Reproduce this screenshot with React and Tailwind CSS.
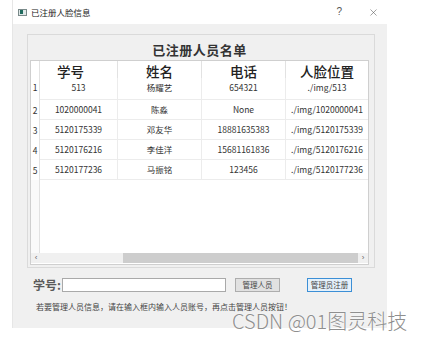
import { X } from "lucide-react";

const rows = [
  { id: "513", name: "杨耀艺", phone: "654321", img: "./img/513" },
  { id: "1020000041", name: "陈淼", phone: "None", img: "./img/1020000041" },
  { id: "5120175339", name: "邓友华", phone: "18881635383", img: "./img/5120175339" },
  { id: "5120176216", name: "李佳洋", phone: "15681161836", img: "./img/5120176216" },
  { id: "5120177236", name: "马振铭", phone: "123456", img: "./img/5120177236" },
];

const cjk = { fontFamily: '"Noto Sans CJK SC", "Noto Sans", sans-serif' };
const cols = "grid grid-cols-[9px_78px_84px_84px_82px]";

export default function App() {
  return (
    <div className="relative w-[423px] h-[340px] bg-white overflow-hidden" style={cjk}>
      <div className="ml-[12px] w-[375px] border-l border-[#e6e6e6]">
        {/* title bar */}
        <div className="h-[24px] flex items-center bg-white">
          <div className="ml-[5px] w-[9px] h-[7px] border border-[#7a8a8a] bg-[#dfe8e8] flex items-center pl-[1px]">
            <div className="w-[3px] h-[4px] bg-[#1f6b5e]" />
          </div>
          <span className="ml-[4px] text-[8.5px] text-[#222] leading-none">已注册人脸信息</span>
          <span className="ml-auto text-[10px] text-[#555] leading-none" style={{ fontFamily: '"Liberation Sans", sans-serif' }}>?</span>
          <X className="ml-[26px] mr-[8px] w-[11px] h-[11px] text-[#555]" strokeWidth={1.2} />
        </div>

        {/* body */}
        <div className="h-[304px] bg-[#f0f0f0] pt-[10px] pl-[14px]">
          <div className="w-[348px] h-[234px] border border-[#dadada] flex flex-col pl-[2px] pr-[5px] pb-[2px]">
            <div className="h-[25px] flex items-center justify-center pt-[4px]">
              <span className="text-[13px] font-bold text-[#333] tracking-[0.5px]">已注册人员名单</span>
            </div>

            <div className="flex-1 border border-[#cfcfcf] bg-white flex flex-col">
              <div className={`${cols} h-[17px]`}>
                <div className="border-r border-[#e2e2e2]" />
                {["学号", "姓名", "电话", "人脸位置"].map((h, i) => (
                  <div key={h} className={`flex items-end justify-center text-[13.5px] font-medium text-[#222] leading-none ${i === 0 ? "pr-[16px]" : ""} ${i < 3 ? "border-r border-[#e2e2e2]" : ""}`}>
                    {h}
                  </div>
                ))}
              </div>
              {rows.map((r, idx) => (
                <div key={r.id} className={`${cols} ${idx === 0 ? "h-[22px]" : "h-[20px]"}`}>
                  <div className={`border-r border-[#e2e2e2] text-[8.5px] text-[#333] flex justify-center ${idx === 0 ? "items-start pt-[3px]" : "items-center"}`}>
                    {idx + 1}
                  </div>
                  {[r.id, r.name, r.phone, r.img].map((v, i) => (
                    <div
                      key={i}
                      className={`border-b border-[#ececec] flex justify-center text-[8.5px] text-[#333] ${idx === 0 ? "items-start pt-[3px]" : "items-center"} ${i < 3 ? "border-r border-[#e2e2e2]" : ""}`}
                    >
                      {v}
                    </div>
                  ))}
                </div>
              ))}
              <div className="flex-1 flex">
                <div className="w-[9px] border-r border-[#e2e2e2] bg-[#fafafa]" />
              </div>
              {/* horizontal scrollbar */}
              <div className="h-[10px] mb-[1px] flex items-center bg-[#f0f0f0] text-[8px] text-[#666]" style={{ fontFamily: '"Liberation Sans", sans-serif' }}>
                <span className="w-[10px] text-center leading-none">‹</span>
                <div className="w-[82px]" />
                <div className="w-[235px] h-full bg-[#cdcdcd]" />
                <span className="flex-1 text-center leading-none">›</span>
              </div>
            </div>
          </div>

          {/* input row */}
          <div className="mt-[10px] flex items-center h-[14px]">
            <span className="ml-[6px] text-[12px] font-bold text-[#5a5a5a] leading-none">学号:</span>
            <div className="ml-[1px] w-[164px] h-[14px] bg-white border border-[#a9a9a9]" />
            <div className="ml-[9px] w-[45px] h-[14px] bg-[#e1e1e1] border border-[#adadad] flex items-center justify-center text-[7.5px] text-[#444]">
              管理人员
            </div>
            <div className="ml-[27px] w-[45px] h-[14px] bg-[#e5f1fb] border-[1.5px] border-[#3c8fd6] flex items-center justify-center text-[7.5px] text-[#444]">
              管理员注册
            </div>
          </div>

          <div className="mt-[11px] ml-[9px] text-[8px] text-[#444] leading-none">
            若要管理人员信息，请在输入框内输入人员账号，再点击管理人员按钮！
          </div>
        </div>
      </div>

      {/* watermark */}
      <div className="absolute left-[232px] top-[311px] text-[20px] font-light text-[#8f8f8f] leading-none whitespace-nowrap" style={{ textShadow: "0 0 2px #fff" }}>
        CSDN @01图灵科技
      </div>
    </div>
  );
}
